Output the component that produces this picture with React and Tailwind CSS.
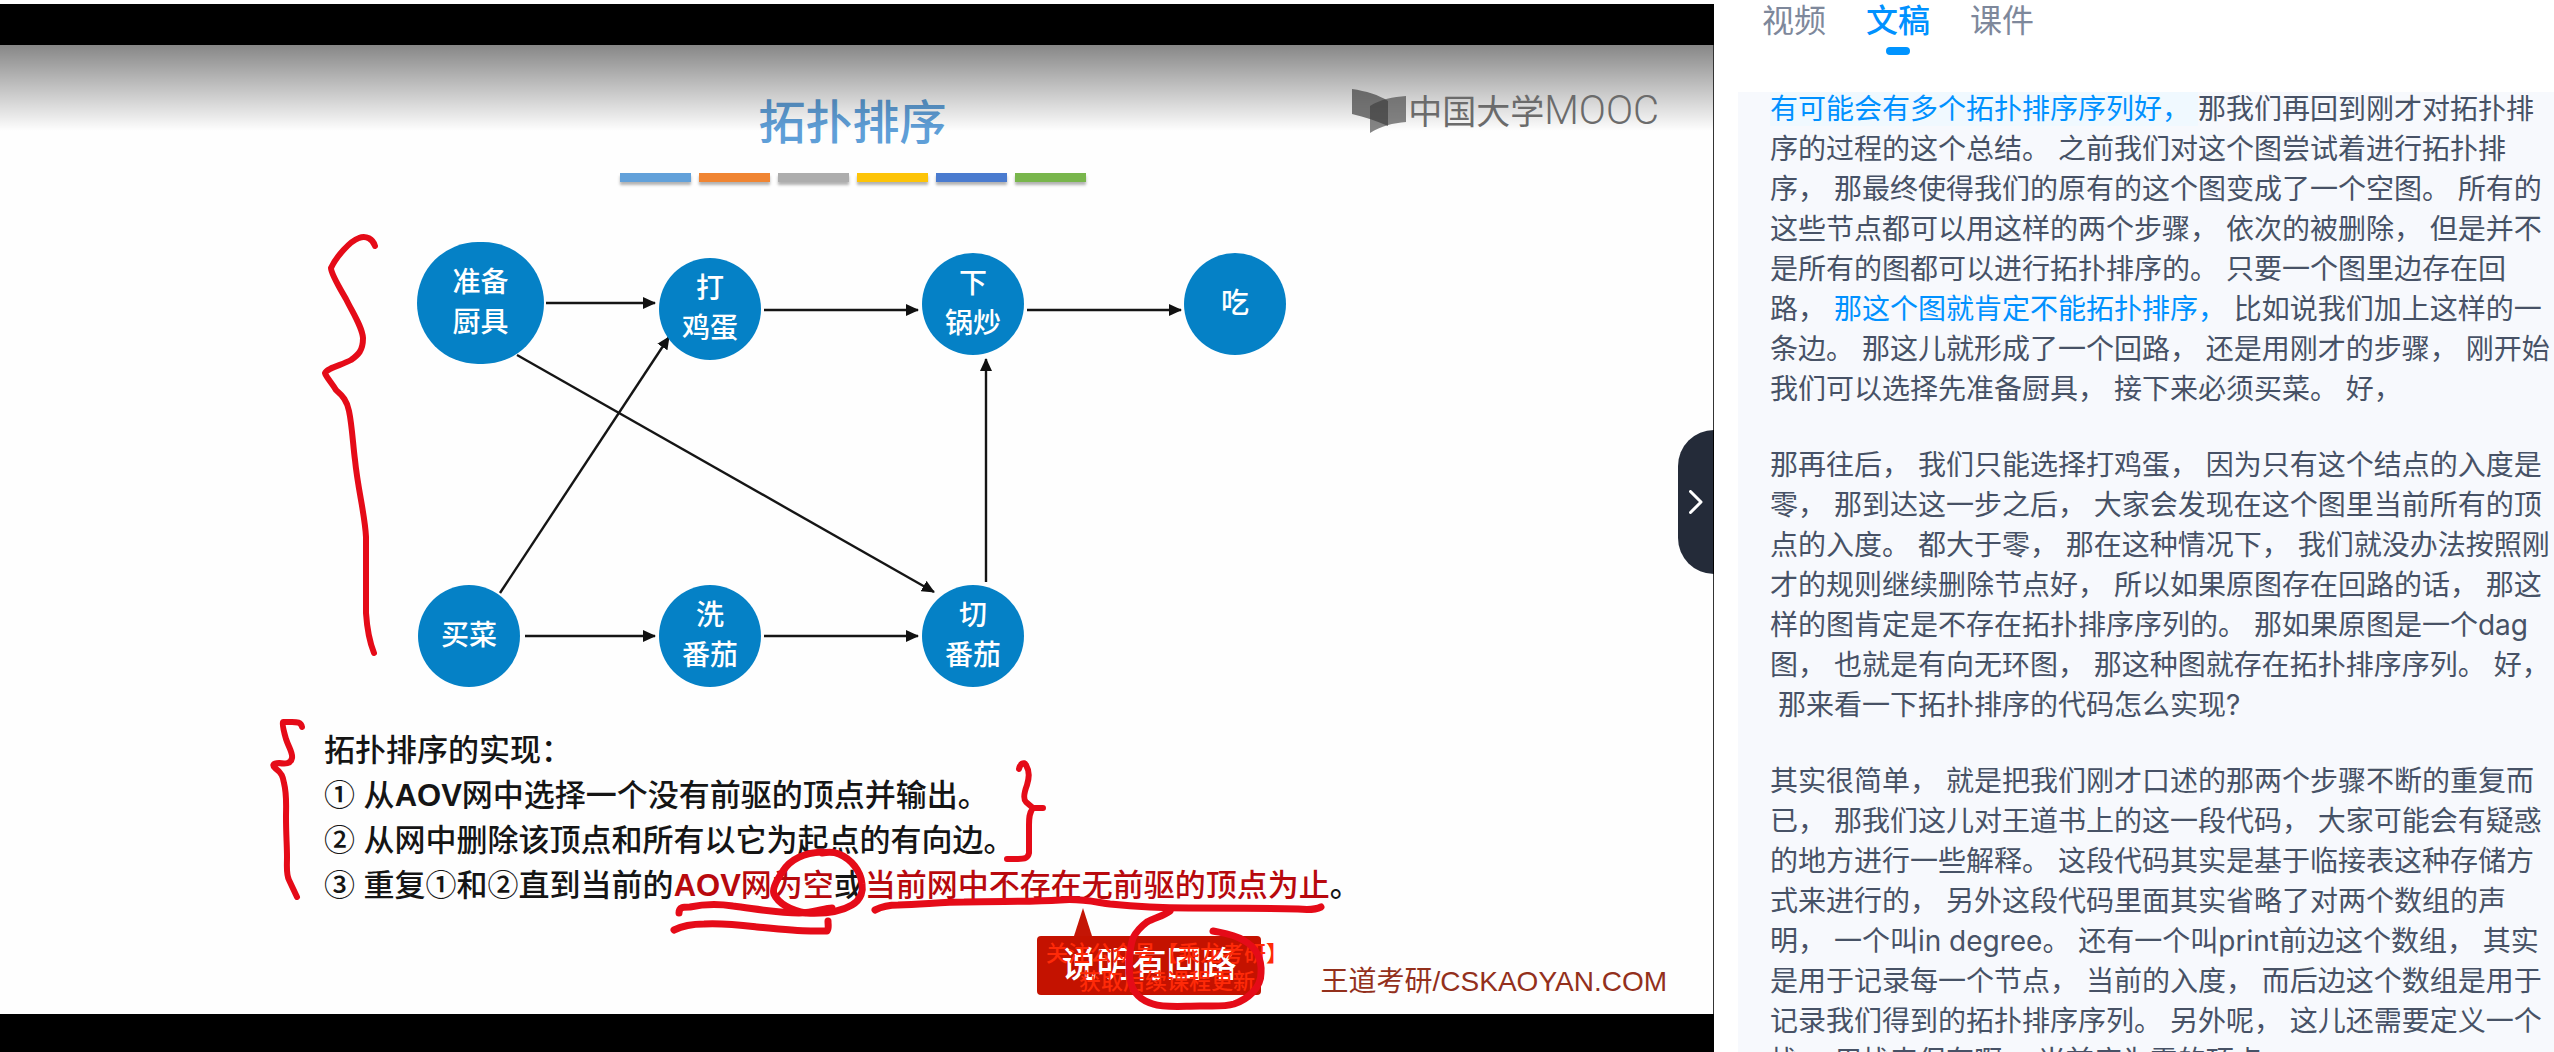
import React from "react";

const nodes = [
  { id: "kitchen", lines: ["准备", "厨具"], box: "left-[417px] top-[197px] w-[127px] h-[122px]" },
  { id: "egg", lines: ["打", "鸡蛋"], box: "left-[659px] top-[213px] w-[102px] h-[102px]" },
  { id: "fry", lines: ["下", "锅炒"], box: "left-[922px] top-[208px] w-[102px] h-[102px]" },
  { id: "eat", lines: ["吃"], box: "left-[1184px] top-[208px] w-[102px] h-[102px]" },
  { id: "buy", lines: ["买菜"], box: "left-[418px] top-[540px] w-[102px] h-[102px]" },
  { id: "wash", lines: ["洗", "番茄"], box: "left-[659px] top-[540px] w-[102px] h-[102px]" },
  { id: "cut", lines: ["切", "番茄"], box: "left-[922px] top-[540px] w-[102px] h-[102px]" },
];

const edges = [
  [546, 258, 655, 258],
  [764, 265, 918, 265],
  [1027, 265, 1181, 265],
  [525, 591, 655, 591],
  [764, 591, 918, 591],
  [500, 548, 669, 292],
  [517, 310, 934, 547],
  [986, 537, 986, 314],
];

const inkThin = [
  "M375 201C373 194 366 190 359 193C350 196 336 212 331 223C331 229 342 247 346 254C354 270 362 282 363 293C363 306 358 310 351 315C342 320 327 323 325 328C326 332 332 338 336 345C343 351 347 356 349 366C352 380 353 400 355 415C358 445 365 470 366 492V568C367 583 370 598 374 608",
  "M302 682C301 677 297 677 292 677H283C282 679 284 687 286 694C289 703 293 708 292 713C291 719 285 719 279 718C273 718 272 720 275 723C282 728 283 732 284 738C287 750 286 760 286 772C286 790 287 800 287 812C287 822 286 829 289 835L297 852",
  "M1019 724C1020 719 1024 716 1026 720C1030 727 1029 733 1027 740C1024 748 1023 754 1026 757L1033 763H1043M1033 763C1029 768 1029 774 1029 780V808C1028 813 1025 814 1018 814H1007",
];

const inkThick = [
  "M679 868C679 862 683 862 690 862C704 859 720 859 733 861C757 864 778 868 799 868C814 868 824 863 832 863",
  "M674 885C684 880 694 879 704 879C724 878 740 880 757 882C777 884 795 886 811 886H827C829 884 828 880 828 876",
  "M822 807C803 808 790 815 783 826C776 836 772 844 774 849C778 858 791 866 806 868C825 869 842 866 852 860C862 854 863 845 862 839C861 826 851 814 839 809C834 807 828 807 822 808",
  "M875 865C883 861 889 860 898 860C925 859 945 857 964 857C1000 856 1030 857 1060 855C1080 853 1095 857 1110 859C1140 862 1160 863 1189 863C1230 863 1260 863 1298 864C1308 865 1317 864 1321 862",
  "M1170 866C1164 871 1153 873 1147 877C1139 883 1136 887 1133 893C1129 905 1128 925 1131 938C1134 950 1143 956 1153 959C1165 963 1182 961 1200 961C1214 961 1224 962 1234 959C1248 954 1261 943 1261 928C1262 914 1256 902 1243 895C1233 889 1222 888 1213 886",
];

const accents = [
  "bg-[#62a1da]",
  "bg-[#f08533]",
  "bg-[#adadad]",
  "bg-[#fdc408]",
  "bg-[#4a7bcf]",
  "bg-[#79b64c]",
];

const tabs = ["视频", "文稿", "课件"];

function MoocLogo() {
  return (
    <div className="flex items-center gap-px text-[#6b6b6b]">
      <svg width="56" height="46" viewBox="0 0 56 46" aria-hidden="true">
        <path d="M1 1C15 3 28 7 37 13V38C26 33 14 29 1 26Z" fill="#3c3c3c" fillOpacity="0.68" />
        <path d="M19 45V18C30 11 42 9 55 8V34C42 35 30 38 19 45Z" fill="#3c3c3c" fillOpacity="0.62" />
      </svg>
      <div className="flex items-baseline leading-none">
        <span className="text-[34px]">中国大学</span>
        <span className="font-['Roboto'] text-[40px] font-light">MOOC</span>
      </div>
    </div>
  );
}

function Diagram() {
  return (
    <>
      <svg className="absolute inset-0 h-full w-full" aria-hidden="true">
        <defs>
          <marker id="tip" markerWidth="13" markerHeight="12" refX="12" refY="6" orient="auto" markerUnits="userSpaceOnUse">
            <path d="M0 0L13 6L0 12Z" fill="#111" />
          </marker>
        </defs>
        {edges.map(([x1, y1, x2, y2]) => (
          <line key={`${x1}-${y1}`} x1={x1} y1={y1} x2={x2} y2={y2} stroke="#151515" strokeWidth="2.4" markerEnd="url(#tip)" />
        ))}
      </svg>
      {nodes.map((n) => (
        <div
          key={n.id}
          className={`absolute flex flex-col items-center justify-center rounded-full bg-[#0581c6] text-[28px] leading-10 font-medium text-white ${n.box}`}
        >
          {n.lines.map((l) => (
            <span key={l}>{l}</span>
          ))}
        </div>
      ))}
    </>
  );
}

function Ink() {
  return (
    <svg className="pointer-events-none absolute inset-0 h-full w-full" fill="none" stroke="#e50b18" strokeLinecap="round" strokeLinejoin="round" aria-hidden="true">
      {inkThin.map((d) => (
        <path key={d} d={d} strokeWidth="6" />
      ))}
      {inkThick.map((d) => (
        <path key={d} d={d} strokeWidth="7" />
      ))}
    </svg>
  );
}

function Slide() {
  return (
    <div className="relative flex min-h-0 flex-1 flex-col border-r border-[#333] bg-[#fefefe] font-['Liberation_Sans','Noto_Sans_CJK_SC',sans-serif]">
      <Diagram />
      <header className="flex flex-col items-center gap-5 pt-12 pr-2">
        <h1 className="text-[47px] leading-[60px] font-medium text-[#5f9fd8]">拓扑排序</h1>
        <div className="flex gap-2">
          {accents.map((c) => (
            <span key={c} className={`h-[9px] w-[71px] shadow-[0_3px_3px_rgba(0,0,0,0.3)] ${c}`} />
          ))}
        </div>
      </header>
      <div className="pointer-events-none absolute inset-x-0 top-0 h-[86px] bg-linear-to-b from-black/47 to-black/0" />
      <div className="absolute top-[43px] right-[54px]">
        <MoocLogo />
      </div>
      <div className="mt-auto pb-[106px] pl-[324px] text-[31px] leading-[45px] font-medium text-[#151515]">
        <p>拓扑排序的实现：</p>
        <p>① 从<b>AOV</b>网中选择一个没有前驱的顶点并输出。</p>
        <p>② 从网中删除该顶点和所有以它为起点的有向边。</p>
        <p>
          ③ 重复①和②直到当前的<span className="text-[#b8090d]"><b>AOV</b>网为空</span>或<span className="text-[#b8090d]">当前网中不存在无前驱的顶点为止</span>。
        </p>
      </div>
      <div className="absolute top-[863px] left-[1037px] flex flex-col">
        <svg className="ml-9 h-7 w-5" viewBox="0 0 20 28" aria-hidden="true">
          <path d="M10 0L19 28H1Z" fill="#c41505" />
        </svg>
        <div className="flex h-[59px] w-56 items-center justify-center rounded-sm bg-[#c41200] text-[35px] font-medium text-white">
          说明有回路
        </div>
      </div>
      <div className="absolute bottom-[18px] left-[1046px] flex flex-col items-center text-[22px] leading-7 font-medium whitespace-nowrap text-[#ff2a08]">
        <span>关注公众号【乘龙考研】</span>
        <span>获取后续课程更新</span>
      </div>
      <div className="absolute right-[46px] bottom-3 text-[28px] leading-10 text-[#93301c]">王道考研/CSKAOYAN.COM</div>
      <Ink />
    </div>
  );
}

function Transcript() {
  return (
    <div className="ml-6 min-h-0 flex-1 overflow-hidden bg-[#f7f9fd] pl-8 text-[28px] leading-10 text-[#475266]">
      <div className="-mt-[3px] flex flex-col gap-9">
        <p>
          <span className="bg-[#f0f9ff] text-[#0091ff]">有可能会有多个拓扑排序序列好， </span>
          那我们再回到刚才对拓扑排序的过程的这个总结。 之前我们对这个图尝试着进行拓扑排序， 那最终使得我们的原有的这个图变成了一个空图。 所有的这些节点都可以用这样的两个步骤， 依次的被删除， 但是并不是所有的图都可以进行拓扑排序的。 只要一个图里边存在回路， <span className="text-[#0091ff]">那这个图就肯定不能拓扑排序，</span> 比如说我们加上这样的一条边。 那这儿就形成了一个回路， 还是用刚才的步骤， 刚开始我们可以选择先准备厨具， 接下来必须买菜。 好，
        </p>
        <p>
          那再往后， 我们只能选择打鸡蛋， 因为只有这个结点的入度是零， 那到达这一步之后， 大家会发现在这个图里当前所有的顶点的入度。 都大于零， 那在这种情况下， 我们就没办法按照刚才的规则继续删除节点好， 所以如果原图存在回路的话， 那这样的图肯定是不存在拓扑排序序列的。 那如果原图是一个dag图， 也就是有向无环图， 那这种图就存在拓扑排序序列。 好，
          <br />
          &nbsp;那来看一下拓扑排序的代码怎么实现?
        </p>
        <p>
          其实很简单， 就是把我们刚才口述的那两个步骤不断的重复而已， 那我们这儿对王道书上的这一段代码， 大家可能会有疑惑的地方进行一些解释。 这段代码其实是基于临接表这种存储方式来进行的， 另外这段代码里面其实省略了对两个数组的声明， 一个叫in degree。 还有一个叫print前边这个数组， 其实是用于记录每一个节点， 当前的入度， 而后边这个数组是用于记录我们得到的拓扑排序序列。 另外呢， 这儿还需要定义一个栈， 用栈来保存啊， 当前度为零的顶点
        </p>
      </div>
    </div>
  );
}

export default function App() {
  return (
    <div lang="zh-CN" className="flex h-screen overflow-hidden bg-white font-['Inter','Noto_Sans_CJK_SC',sans-serif]">
      <main className="relative flex min-w-0 flex-1 flex-col border-t-4 border-[#fdfdfd] bg-black pt-[41px] pb-[38px]">
        <Slide />
        <button
          type="button"
          aria-label="展开"
          className="absolute top-[426px] right-0 flex h-36 w-9 items-center justify-center rounded-l-[36px] border-r border-black bg-[#242b39]"
        >
          <svg width="14" height="24" viewBox="0 0 14 24" fill="none" stroke="white" strokeWidth="3" strokeLinecap="round" strokeLinejoin="round" aria-hidden="true">
            <path d="M1.5 1.5L12 12L1.5 22.5" />
          </svg>
        </button>
      </main>
      <aside className="flex w-[840px] flex-col">
        <nav role="tablist" className="flex h-[92px] items-start gap-10 pl-12">
          {tabs.map((t) => {
            const active = t === "文稿";
            return (
              <button
                key={t}
                type="button"
                role="tab"
                aria-selected={active}
                className={`flex flex-col items-center gap-[5px] text-[32px] leading-[42px] ${active ? "font-medium text-[#0091ff]" : "text-[#7e889b]"}`}
              >
                {t}
                {active && <span className="h-2 w-6 rounded-full bg-[#0094ff]" />}
              </button>
            );
          })}
        </nav>
        <Transcript />
      </aside>
    </div>
  );
}
